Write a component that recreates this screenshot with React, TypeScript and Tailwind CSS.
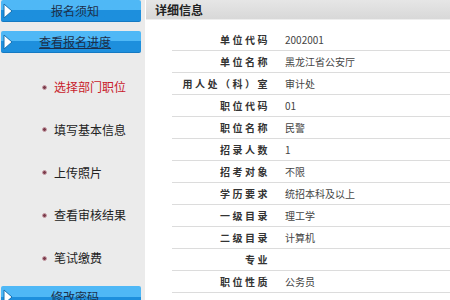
const menu = [
  { label: '选择部门职位', active: true },
  { label: '填写基本信息' },
  { label: '上传照片' },
  { label: '查看审核结果' },
  { label: '笔试缴费' },
];

const rows: [string, string][] = [
  ['单位代码', '2002001'],
  ['单位名称', '黑龙江省公安厅'],
  ['用人处（科）室', '审计处'],
  ['职位代码', '01'],
  ['职位名称', '民警'],
  ['招录人数', '1'],
  ['招考对象', '不限'],
  ['学历要求', '统招本科及以上'],
  ['一级目录', '理工学'],
  ['二级目录', '计算机'],
  ['专业', ''],
  ['职位性质', '公务员'],
];

function BlueBar({ text, underline }: { text: string; underline?: boolean }) {
  return (
    <div className="relative shrink-0 ml-[1px] w-[140px] h-[22px] rounded-[2px] overflow-hidden bg-gradient-to-b from-[#4fb8f6] from-50% to-[#1d8fdd] to-50% border-b border-[#1479c2]">
      <svg className="absolute left-[2px] top-[3px]" width="10" height="16" viewBox="0 0 10 16">
        <path d="M1 1 L9 8 L1 15 Z" fill="#ffffff" stroke="#1670b0" strokeWidth="1" />
      </svg>
      <div
        className={`h-full flex items-center justify-center pl-[8px] text-[12px] text-[#1c2f4a] ${underline ? 'underline' : ''}`}
      >
        {text}
      </div>
    </div>
  );
}

export default function App() {
  return (
    <div
      className="w-[450px] h-[300px] overflow-hidden flex bg-white"
      style={{ fontFamily: '"Noto Sans CJK SC", "Noto Sans", sans-serif' }}
    >
      <div className="w-[145px] shrink-0 bg-[#ebebeb] flex flex-col">
        <BlueBar text="报名须知" />
        <div className="h-[9px] shrink-0" />
        <BlueBar text="查看报名进度" underline />
        <div className="h-[233px] shrink-0 flex flex-col gap-[26.75px] pt-[26px]">
          {menu.map((m) => (
            <div key={m.label} className="h-[16px] shrink-0 flex items-center pl-[42px]">
              <span className="w-[5px] h-[5px] rounded-full bg-[#7a3b4a] border border-[#c9a0aa]" />
              <span
                className={`ml-[7px] text-[12px] leading-[16px] ${m.active ? 'text-[#c8202a]' : 'text-[#222]'}`}
              >
                {m.label}
              </span>
            </div>
          ))}
        </div>
        <BlueBar text="修改密码" />
      </div>
      <div className="flex-1 pl-[1px] flex flex-col">
        <div className="h-[20px] shrink-0 bg-gradient-to-b from-[#e6e6e6] to-[#d8d8d8] border-b border-[#eeeeee] flex items-center pl-[9px] text-[12px] font-bold text-[#222]">
          详细信息
        </div>
        <div className="pt-[9px] pl-[26px]">
          {rows.map(([k, v]) => (
            <div key={k} className="h-[22px] flex items-center border-b border-[#dcdcdc]">
              <div className="w-[104px] pr-[6px] text-right whitespace-nowrap text-[10px] font-bold tracking-[2.5px] text-[#333]">
                {k}
              </div>
              <div className="pl-[9px] text-[10px] text-[#444]">{v}</div>
            </div>
          ))}
        </div>
      </div>
    </div>
  );
}
